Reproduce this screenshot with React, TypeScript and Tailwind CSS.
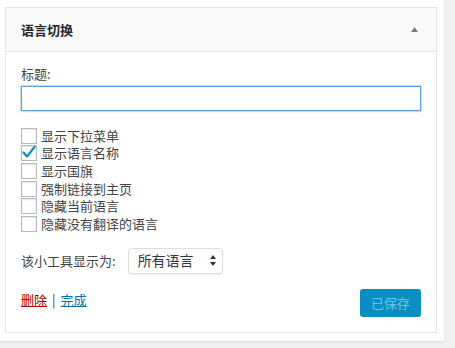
import React from "react";

const options = [
  { label: "显示下拉菜单", checked: false },
  { label: "显示语言名称", checked: true },
  { label: "显示国旗", checked: false },
  { label: "强制链接到主页", checked: false },
  { label: "隐藏当前语言", checked: false },
  { label: "隐藏没有翻译的语言", checked: false },
];

const Checkbox: React.FC<{ checked: boolean }> = ({ checked }) => (
  <span className="relative flex h-4 w-4 shrink-0 items-center justify-center border border-[#b4b9be] bg-white shadow-[inset_0_1px_2px_rgba(0,0,0,0.1)]">
    {checked && (
      <svg viewBox="0 0 16 16" className="absolute -left-px -top-px h-4 w-4">
        <path d="M2.5 7.5 L6 11.5 L13.5 2" fill="none" stroke="#1e8cbe" strokeWidth="2.3" strokeLinecap="round" strokeLinejoin="round" />
      </svg>
    )}
  </span>
);

export default function App() {
  return (
    <div
      className="h-[348px] w-[455px] bg-[#f1f1f1] text-[13px] text-[#444]"
      style={{ fontFamily: '"Noto Sans CJK SC", "Noto Sans", sans-serif' }}
    >
      <div className="h-[341px] w-[444px] bg-white pl-[5px] pt-[7px] shadow-[0_1px_2px_rgba(0,0,0,0.08)]">
        <div className="w-[432px] border border-[#e5e5e5] bg-white">
          {/* header */}
          <div className="flex h-[44px] items-center justify-between border-b border-[#e5e5e5] bg-[#f9f9f9] pl-[15px] pr-[18px]">
            <span className="text-[13px] font-semibold text-[#23282d]">语言切换</span>
            <svg viewBox="0 0 8 6" className="h-[5px] w-[7px]">
              <path d="M4 0 L8 6 L0 6 Z" fill="#72777c" />
            </svg>
          </div>

          {/* body */}
          <div className="px-[15px] pb-[15px] pt-[13px]">
            <label className="block h-[18px] leading-[18px]">标题:</label>
            <input
              type="text"
              className="mt-[3px] block h-[25px] w-[400px] border border-[#5b9dd9] bg-white shadow-[0_0_2px_rgba(30,140,190,0.8)] outline-none"
            />

            <div className="mt-[16px] flex flex-col">
              {options.map((o) => (
                <div key={o.label} className="flex h-[17.6px] items-center gap-[4px]">
                  <Checkbox checked={o.checked} />
                  <span className="leading-[16px]">{o.label}</span>
                </div>
              ))}
            </div>

            <div className="mt-[15px] flex h-[26px] items-center">
              <span>该小工具显示为:</span>
              <div className="ml-[12px] flex h-[26px] w-[95px] items-center justify-between rounded-[4px] border border-[#ddd] bg-white pl-[9px] pr-[6px] text-[14px] text-[#32373c] shadow-[0_1px_2px_rgba(0,0,0,0.07)]">
                <span>所有语言</span>
                <svg viewBox="0 0 6 11" className="h-[11px] w-[6px]">
                  <path d="M3 0 L6 4 L0 4 Z M3 11 L6 7 L0 7 Z" fill="#333" />
                </svg>
              </div>
            </div>

            <div className="mt-[15px] flex items-start justify-between">
              <div className="mt-[2px] flex items-center leading-[18px]">
                <a className="text-[#a00] underline">删除</a>
                <span className="mx-[5px]">|</span>
                <a className="text-[#0073aa] underline">完成</a>
              </div>
              <button className="h-[28px] w-[61px] rounded-[3px] bg-[#0a8ec2] text-[13px] text-[#66c6e4]">
                已保存
              </button>
            </div>
          </div>
        </div>
      </div>
    </div>
  );
}
